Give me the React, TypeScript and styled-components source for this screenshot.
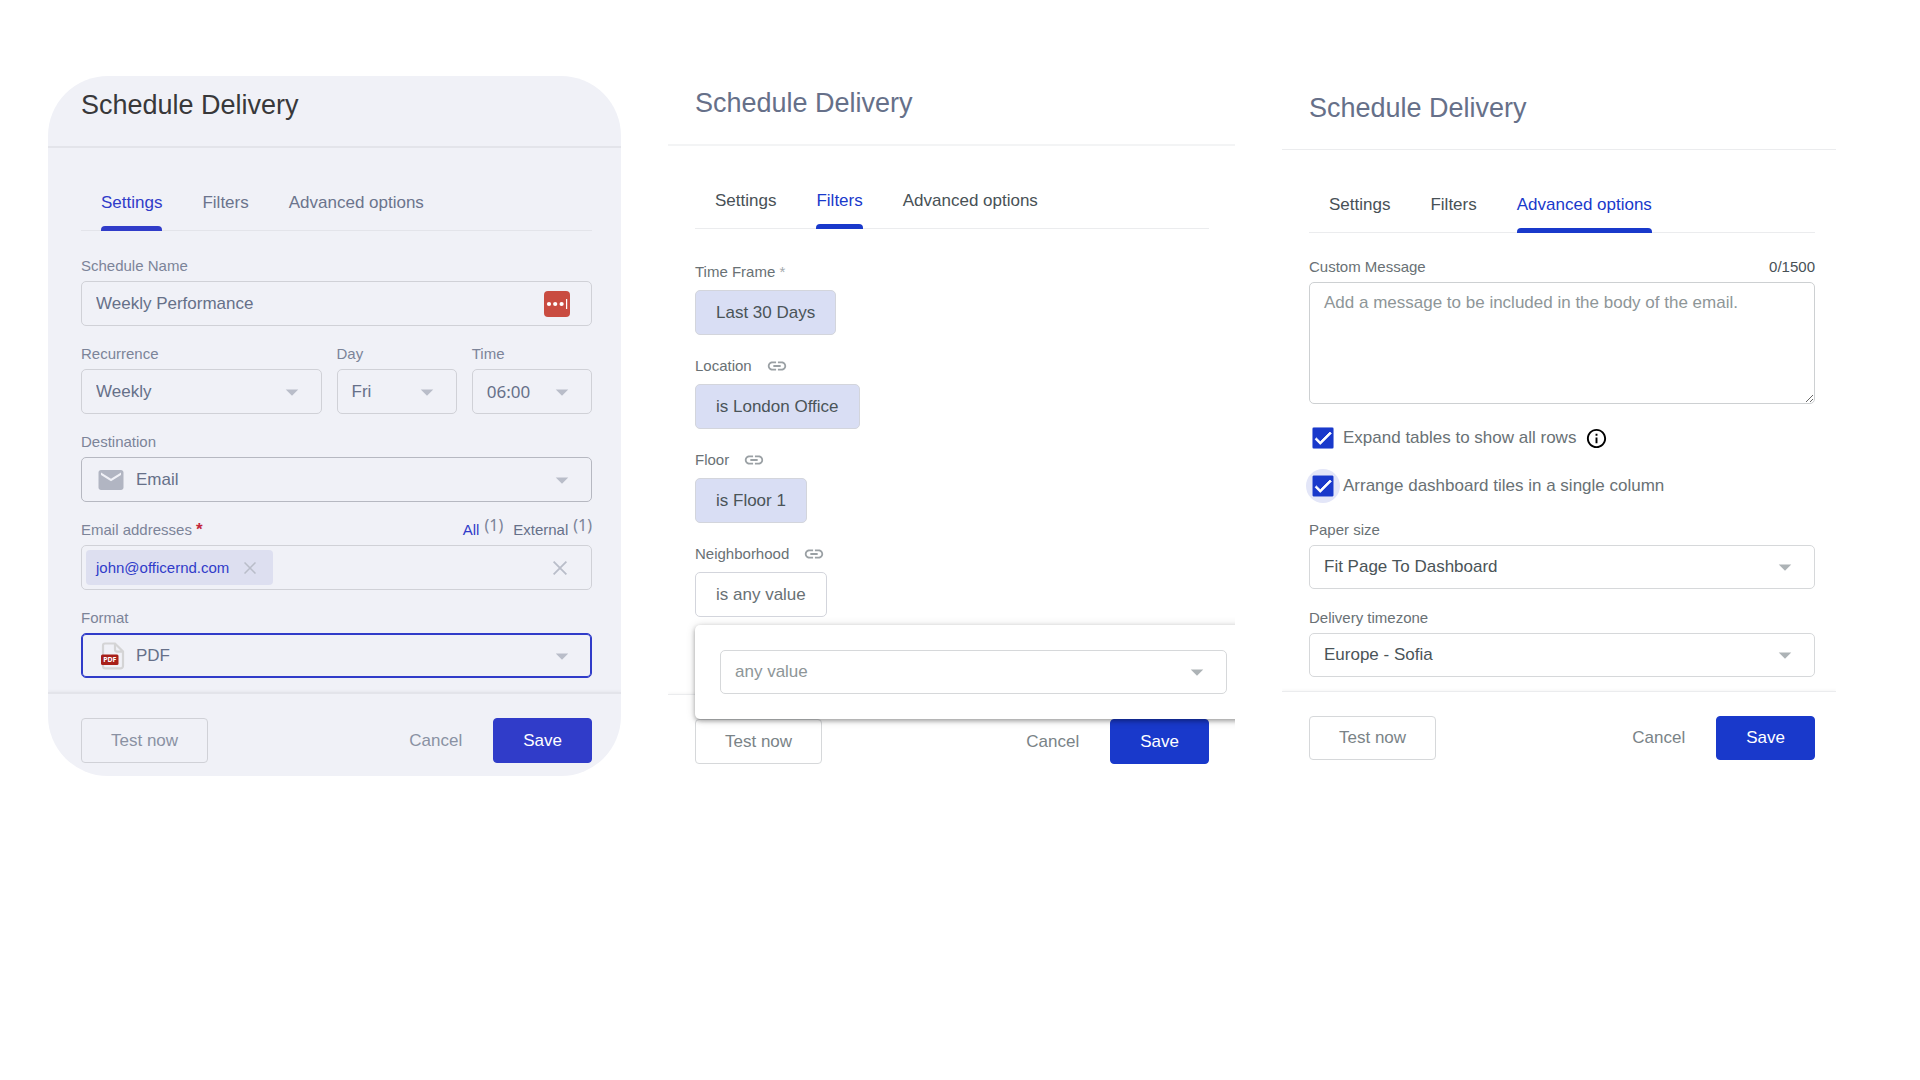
import React from "react";
import styled, { createGlobalStyle, css, ThemeProvider } from "styled-components";
import { MdArrowDropDown, MdCheck, MdEmail, MdInfoOutline, MdLink } from "react-icons/md";

const tinted = {
  surface: "#f0f1f7",
  title: "#38383a",
  rule: "#e3e4ea",
  tab: "#6b748d",
  accent: "#303cc9",
  label: "#7c8499",
  text: "#667089",
  placeholder: "#667089",
  border: "#d0d1d7",
  caret: "#b9bdc9",
  action: "#8a91a3",
};

const plain = {
  surface: "#ffffff",
  title: "#667089",
  rule: "#ebecee",
  tab: "#485156",
  accent: "#1939cb",
  label: "#697175",
  text: "#4a5458",
  placeholder: "#8e9698",
  border: "#d6d8da",
  caret: "#adb3b6",
  action: "#7a8387",
};

const GlobalStyle = createGlobalStyle`
  *, *::before, *::after { box-sizing: border-box; }
  body {
    margin: 0;
    background: #ffffff;
    font-family: "Liberation Sans", Arial, sans-serif;
    font-size: 17px;
    line-height: 20px;
  }
  button, input, select, textarea { font: inherit; }
  button { cursor: pointer; }
`;

const Board = styled.main`
  display: grid;
  grid-template-columns: 573fr 567fr 554fr;
  align-items: start;
  gap: 47px;
  padding: 76px 84px 40px 48px;
`;

const Panel = styled.section<{ $round?: boolean; $compact?: boolean; $end: number }>`
  --start: ${(p) => (p.$round ? 33 : 27)}px;
  --end: ${(p) => p.$end}px;
  --control: ${(p) => (p.$compact ? 44 : 45)}px;
  overflow: hidden;
  border-radius: ${(p) => (p.$round ? 60 : 0)}px;
  background: ${(p) => p.theme.surface};
`;

const Header = styled.header<{ $top: number; $line: number; $soft?: boolean }>`
  padding: ${(p) => p.$top}px var(--end) 25px var(--start);
  border-bottom: ${(p) => p.$line}px solid ${(p) => (p.$soft ? "#f3f4f5" : p.theme.rule)};
`;

const Title = styled.h2`
  margin: 0;
  color: ${(p) => p.theme.title};
  font-size: 27px;
  font-weight: 400;
  line-height: 32px;
`;

const Body = styled.div<{ $bottom: number }>`
  padding: 45px var(--end) ${(p) => p.$bottom}px var(--start);
`;

const TabList = styled.div`
  display: flex;
  gap: 40px;
  padding: 0 20px;
  box-shadow: inset 0 -1px 0 ${(p) => p.theme.rule};
`;

const TabButton = styled.button<{ $active: boolean }>`
  display: flex;
  flex-direction: column;
  gap: 13px;
  padding: 0;
  border: 0;
  background: none;
  color: ${(p) => (p.$active ? p.theme.accent : p.theme.tab)};
  white-space: nowrap;

  &::after {
    content: "";
    width: 100%;
    height: 5px;
    border-radius: 4px 4px 0 0;
    background: ${(p) => (p.$active ? p.theme.accent : "transparent")};
  }
`;

const Form = styled.div<{ $top: number; $gap: number }>`
  display: flex;
  flex-direction: column;
  gap: ${(p) => p.$gap}px;
  padding-top: ${(p) => p.$top}px;
`;

const FieldBox = styled.div<{ $gap?: number }>`
  display: flex;
  flex-direction: column;
  gap: ${(p) => p.$gap ?? 5}px;
  min-width: 0;
`;

const LabelRow = styled.div`
  display: flex;
  align-items: center;
  justify-content: space-between;
  height: 20px;
  color: ${(p) => p.theme.label};
  font-size: 15px;
`;

const LinkedLabel = styled(LabelRow)`
  justify-content: flex-start;
  gap: 14px;
`;

const Required = styled.span`
  color: #c3263c;
  font-size: 17px;
  font-weight: 700;
`;

const SoftMark = styled.span`
  color: #a3a9ac;
`;

const Columns = styled.div`
  display: grid;
  grid-template-columns: 2fr 1fr 1fr;
  gap: 15px;
`;

const Control = styled.div<{ $tone?: "strong" | "focus" }>`
  display: grid;
  grid-template-columns: minmax(0, 1fr);
  grid-template-areas: "field";
  align-items: center;
  height: var(--control);
  border: 1px solid ${(p) => p.theme.border};
  border-radius: 5px;
  color: ${(p) => p.theme.text};

  ${(p) => p.$tone === "strong" && css`border-color: #b6b8c1;`}
  ${(p) =>
    p.$tone === "focus" &&
    css`
      border-color: ${p.theme.accent};
      box-shadow: inset 0 0 0 1px ${p.theme.accent};
    `}

  > * { grid-area: field; }
`;

const fieldReset = css`
  width: 100%;
  min-width: 0;
  border: 0;
  outline: 0;
  background: transparent;
  color: inherit;
`;

const TextInput = styled.input`
  ${fieldReset}
  padding: 0 60px 0 14px;
`;

const NativeSelect = styled.select<{ $icon?: boolean; $muted?: boolean; $numeric?: boolean }>`
  ${fieldReset}
  padding: 0 40px 0 ${(p) => (p.$icon ? 54 : 14)}px;
  appearance: none;
  ${(p) => p.$muted && css`color: ${p.theme.placeholder};`}
  ${(p) => p.$numeric && css`font-family: "Noto Sans", sans-serif;`}
`;

const Leading = styled.span`
  display: flex;
  margin-left: 14px;
  justify-self: start;
  pointer-events: none;
`;

const Caret = styled(MdArrowDropDown)`
  justify-self: end;
  margin-right: 14px;
  width: 30px;
  height: 30px;
  color: ${(p) => p.theme.caret};
  pointer-events: none;
`;

const VaultButton = styled.button`
  display: flex;
  justify-self: end;
  margin-right: 21px;
  padding: 0;
  border: 0;
  background: none;
`;

const ScopeLinks = styled.span`
  display: flex;
  gap: 10px;
`;

const ScopeLink = styled.a<{ $active?: boolean }>`
  display: flex;
  gap: 5px;
  color: ${(p) => (p.$active ? p.theme.accent : p.theme.text)};
  text-decoration: none;
`;

const Count = styled.span`
  margin-top: -5px;
  color: ${(p) => p.theme.label};
  font-family: "Noto Sans", sans-serif;
  font-size: 16px;
`;

const TokenField = styled.div`
  display: flex;
  align-items: center;
  height: var(--control);
  padding: 0 24px 0 4px;
  border: 1px solid ${(p) => p.theme.border};
  border-radius: 5px;
`;

const Token = styled.span`
  display: flex;
  align-items: center;
  gap: 15px;
  height: 35px;
  padding: 0 17px 0 10px;
  border-radius: 4px;
  background: #dddff0;
  color: ${(p) => p.theme.accent};
  font-size: 15px;
`;

const TokenInput = styled.input`
  ${fieldReset}
  flex: 1;
  width: 0;
`;

const IconButton = styled.button`
  display: flex;
  padding: 0;
  border: 0;
  background: none;
  color: #b9bdc9;
`;

const Anchor = styled.div`
  position: relative;
  display: flex;
`;

const FilterChip = styled.button<{ $filled?: boolean }>`
  height: var(--control);
  padding: 0 20px;
  border: 1px solid #d3d5dc;
  border-radius: 5px;
  background: ${(p) => (p.$filled ? "#d9def4" : "#ffffff")};
  color: ${(p) => (p.$filled ? p.theme.text : p.theme.label)};
`;

const Popup = styled.div`
  --control: 44px;
  position: absolute;
  z-index: 1;
  top: calc(100% + 8px);
  left: 0;
  width: 557px;
  padding: 25px;
  border-radius: 5px;
  background: #ffffff;
  box-shadow: 0 2px 4px rgba(0, 0, 0, 0.3), 0 1px 10px rgba(0, 0, 0, 0.16);
`;

const MessageBox = styled.textarea`
  display: block;
  width: 100%;
  height: 122px;
  padding: 10px 14px;
  border: 1px solid #cdd0d2;
  border-radius: 5px;
  outline: 0;
  color: ${(p) => p.theme.text};

  &::placeholder { color: ${(p) => p.theme.placeholder}; }
`;

const Counter = styled.span`
  color: ${(p) => p.theme.tab};
`;

const Checks = styled.div`
  display: flex;
  flex-direction: column;
  gap: 26px;
  padding: 4px 0;
`;

const CheckRow = styled.div`
  display: flex;
  align-items: center;
  gap: 3px;
  height: 22px;
  margin-left: -3px;
  color: ${(p) => p.theme.label};
`;

const CheckHalo = styled.span<{ $on?: boolean }>`
  display: grid;
  grid-template-areas: "mark";
  place-items: center;
  place-content: center;
  flex: none;
  width: 34px;
  height: 34px;
  border-radius: 50%;
  background: ${(p) => (p.$on ? "#e3e6f8" : "transparent")};
  color: #ffffff;

  > * { grid-area: mark; }
  > svg {
    stroke-width: 1;
    pointer-events: none;
  }
`;

const CheckInput = styled.input`
  width: 22px;
  height: 22px;
  margin: 0;
  appearance: none;
  border: 2px solid ${(p) => p.theme.accent};
  border-radius: 2px;

  &:checked { background: ${(p) => p.theme.accent}; }
  &:not(:checked) + svg { visibility: hidden; }
`;

const InfoButton = styled(IconButton)`
  margin-left: 6px;
  color: #000000;
`;

const Footer = styled.footer<{ $line: number }>`
  display: flex;
  align-items: center;
  gap: 31px;
  padding: 24px var(--end) 13px var(--start);
  border-top: ${(p) => p.$line}px solid ${(p) => p.theme.rule};
  box-shadow: 0 -1px 3px rgba(0, 0, 0, 0.04);
`;

const buttonBase = css`
  height: var(--control);
  padding: 0 29px;
  border-radius: 4px;
  white-space: nowrap;
`;

const OutlineButton = styled.button`
  ${buttonBase}
  margin-right: auto;
  border: 1px solid ${(p) => p.theme.border};
  background: transparent;
  color: ${(p) => p.theme.action};
`;

const TextButton = styled.button`
  padding: 0;
  border: 0;
  background: none;
  color: ${(p) => p.theme.action};
`;

const PrimaryButton = styled.button`
  ${buttonBase}
  border: 1px solid ${(p) => p.theme.accent};
  background: ${(p) => p.theme.accent};
  color: #ffffff;
`;

const CrossIcon = ({ size }: { size: number }) => (
  <svg width={size} height={size} viewBox="0 0 14 14" fill="none" stroke="currentColor" strokeWidth="1.8" aria-hidden="true">
    <path d="M0.6 0.6 13.4 13.4M13.4 0.6 0.6 13.4" />
  </svg>
);

const VaultIcon = () => (
  <svg width="26" height="26" viewBox="0 0 26 26" aria-hidden="true">
    <rect width="26" height="26" rx="4" fill="#c94c41" />
    <g fill="#fff">
      <circle cx="5" cy="13" r="2.1" />
      <circle cx="11.2" cy="13" r="2.1" />
      <circle cx="17.6" cy="13" r="2.1" />
      <rect x="22" y="8" width="1.2" height="10" />
    </g>
  </svg>
);

const PdfIcon = () => (
  <svg width="30" height="30" viewBox="0 0 30 30" aria-hidden="true">
    <path
      d="M9 2.5H19L27 10.5V25a2.4 2.4 0 0 1-2.4 2.4H9.4A2.4 2.4 0 0 1 7 25V4.500a2 2 0 0 1 2-2ZM19 3v5.600a2 2 0 0 0 2 2h5.800"
      fill="none"
      stroke="#d4d4d5"
      strokeWidth="2.2"
    />
    <rect x="5" y="13.500" width="17.500" height="10.500" rx="1.500" fill="#a8201a" />
    <text x="13.800" y="21.300" textAnchor="middle" fontFamily="Noto Sans, sans-serif" fontWeight="700" fontSize="7" fill="#fff">
      PDF
    </text>
  </svg>
);

const tabNames = ["Settings", "Filters", "Advanced options"];

const Tabs = ({ active }: { active: string }) => (
  <TabList role="tablist">
    {tabNames.map((name) => (
      <TabButton key={name} type="button" role="tab" aria-selected={name === active} $active={name === active}>
        {name}
      </TabButton>
    ))}
  </TabList>
);

type SelectProps = {
  id: string;
  value: string;
  label?: string;
  icon?: React.ReactNode;
  tone?: "strong" | "focus";
  muted?: boolean;
  numeric?: boolean;
};

const Select = ({ id, value, label, icon, tone, muted, numeric }: SelectProps) => (
  <Control $tone={tone}>
    <NativeSelect id={id} aria-label={label} $icon={!!icon} $muted={muted} $numeric={numeric} defaultValue={value}>
      <option>{value}</option>
    </NativeSelect>
    {icon && <Leading>{icon}</Leading>}
    <Caret aria-hidden="true" />
  </Control>
);

const SelectField = ({ text, ...rest }: SelectProps & { text: string }) => (
  <FieldBox>
    <LabelRow>
      <label htmlFor={rest.id}>{text}</label>
    </LabelRow>
    <Select {...rest} />
  </FieldBox>
);

const Actions = ({ line }: { line: number }) => (
  <Footer $line={line}>
    <OutlineButton type="button">Test now</OutlineButton>
    <TextButton type="button">Cancel</TextButton>
    <PrimaryButton type="button">Save</PrimaryButton>
  </Footer>
);

const SettingsPanel = () => (
  <Panel $round $end={29}>
    <Header $top={13} $line={2}>
      <Title>Schedule Delivery</Title>
    </Header>
    <Body $bottom={14}>
      <Tabs active="Settings" />
      <Form $top={25} $gap={18}>
        <FieldBox>
          <LabelRow>
            <label htmlFor="schedule-name">Schedule Name</label>
          </LabelRow>
          <Control>
            <TextInput id="schedule-name" defaultValue="Weekly Performance" />
            <VaultButton type="button" aria-label="Fill from vault">
              <VaultIcon />
            </VaultButton>
          </Control>
        </FieldBox>
        <Columns>
          <SelectField id="recurrence" text="Recurrence" value="Weekly" />
          <SelectField id="day" text="Day" value="Fri" />
          <SelectField id="time" text="Time" value="06:00" numeric />
        </Columns>
        <SelectField
          id="destination"
          text="Destination"
          value="Email"
          tone="strong"
          icon={<MdEmail size={30} color="#b1b5c2" />}
        />
        <FieldBox>
          <LabelRow>
            <label htmlFor="emails">
              Email addresses <Required>*</Required>
            </label>
            <ScopeLinks>
              <ScopeLink href="#all" $active>
                All<Count>(1)</Count>
              </ScopeLink>
              <ScopeLink href="#external">
                External<Count>(1)</Count>
              </ScopeLink>
            </ScopeLinks>
          </LabelRow>
          <TokenField>
            <Token>
              john@officernd.com
              <IconButton type="button" aria-label="Remove john@officernd.com">
                <CrossIcon size={12} />
              </IconButton>
            </Token>
            <TokenInput id="emails" />
            <IconButton type="button" aria-label="Clear all addresses">
              <CrossIcon size={14} />
            </IconButton>
          </TokenField>
        </FieldBox>
        <SelectField id="format" text="Format" value="PDF" tone="focus" icon={<PdfIcon />} />
      </Form>
    </Body>
    <Actions line={2} />
  </Panel>
);

const linkedFilters = [
  { name: "Location", value: "is London Office", filled: true },
  { name: "Floor", value: "is Floor 1", filled: true },
  { name: "Neighborhood", value: "is any value", open: true },
];

const FiltersPanel = () => (
  <Panel $end={26}>
    <Header $top={11} $line={2} $soft>
      <Title>Schedule Delivery</Title>
    </Header>
    <Body $bottom={77}>
      <Tabs active="Filters" />
      <Form $top={33} $gap={21}>
        <FieldBox $gap={8}>
          <LabelRow>
            <span>
              Time Frame <SoftMark>*</SoftMark>
            </span>
          </LabelRow>
          <Anchor>
            <FilterChip type="button" $filled>
              Last 30 Days
            </FilterChip>
          </Anchor>
        </FieldBox>
        {linkedFilters.map((filter) => (
          <FieldBox key={filter.name} $gap={8}>
            <LinkedLabel>
              {filter.name}
              <MdLink size={22} color="#9aa0a4" aria-hidden="true" />
            </LinkedLabel>
            <Anchor>
              <FilterChip type="button" $filled={filter.filled}>
                {filter.value}
              </FilterChip>
              {filter.open && (
                <Popup>
                  <Select id="neighborhood" label="Neighborhood value" value="any value" muted />
                </Popup>
              )}
            </Anchor>
          </FieldBox>
        ))}
      </Form>
    </Body>
    <Actions line={1} />
  </Panel>
);

const AdvancedPanel = () => (
  <Panel $compact $end={21}>
    <Header $top={16} $line={1}>
      <Title>Schedule Delivery</Title>
    </Header>
    <Body $bottom={14}>
      <Tabs active="Advanced options" />
      <Form $top={24} $gap={19}>
        <FieldBox>
          <LabelRow>
            <label htmlFor="message">Custom Message</label>
            <Counter>0/1500</Counter>
          </LabelRow>
          <MessageBox id="message" placeholder="Add a message to be included in the body of the email." />
        </FieldBox>
        <Checks>
          <CheckRow>
            <CheckHalo>
              <CheckInput id="expand" type="checkbox" defaultChecked />
              <MdCheck size={22} />
            </CheckHalo>
            <label htmlFor="expand">Expand tables to show all rows</label>
            <InfoButton type="button" aria-label="About expanded tables">
              <MdInfoOutline size={23} />
            </InfoButton>
          </CheckRow>
          <CheckRow>
            <CheckHalo $on>
              <CheckInput id="arrange" type="checkbox" defaultChecked />
              <MdCheck size={22} />
            </CheckHalo>
            <label htmlFor="arrange">Arrange dashboard tiles in a single column</label>
          </CheckRow>
        </Checks>
        <SelectField id="paper" text="Paper size" value="Fit Page To Dashboard" />
        <SelectField id="timezone" text="Delivery timezone" value="Europe - Sofia" />
      </Form>
    </Body>
    <Actions line={1} />
  </Panel>
);

export default function App() {
  return (
    <>
      <GlobalStyle />
      <Board>
        <ThemeProvider theme={tinted}>
          <SettingsPanel />
        </ThemeProvider>
        <ThemeProvider theme={plain}>
          <FiltersPanel />
          <AdvancedPanel />
        </ThemeProvider>
      </Board>
    </>
  );
}
